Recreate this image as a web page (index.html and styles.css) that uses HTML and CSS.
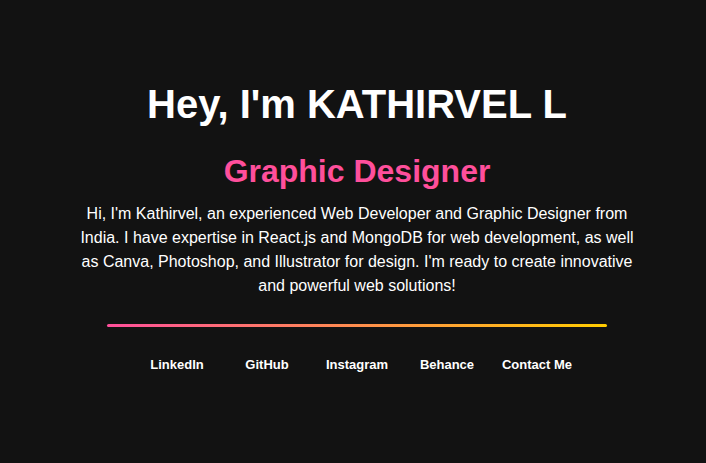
FILE: index.html
```html
<!DOCTYPE html>
<html lang="en">
<head>
<meta charset="UTF-8">
<title>Kathirvel L</title>
<link rel="stylesheet" href="styles.css">
</head>
<body>
<main class="hero">
  <h1 class="title">Hey, I'm KATHIRVEL L</h1>
  <h2 class="role">Graphic Designer</h2>
  <p class="intro">Hi, I'm Kathirvel, an experienced Web Developer and Graphic Designer from India. I have expertise in React.js and MongoDB for web development, as well as Canva, Photoshop, and Illustrator for design. I'm ready to create innovative and powerful web solutions!</p>
  <div class="divider"></div>
  <nav class="links">
    <a href="#">LinkedIn</a>
    <a href="#">GitHub</a>
    <a href="#">Instagram</a>
    <a href="#">Behance</a>
    <a href="#">Contact Me</a>
  </nav>
</main>
</body>
</html>
```
FILE: styles.css
```css
html, body {
  margin: 0;
  padding: 0;
  background: #121212;
}
body {
  font-family: "Liberation Sans", Arial, sans-serif;
  color: #ffffff;
  height: 463px;
}
.hero {
  display: flex;
  flex-direction: column;
  align-items: center;
  padding-top: 81px;
  padding-left: 8px;
}
.title {
  margin: 0;
  font-size: 40px;
  line-height: 46px;
  font-weight: 700;
  text-align: center;
}
.role {
  margin: 25px 0 0;
  font-size: 32px;
  line-height: 38px;
  font-weight: 700;
  color: #ff4f9b;
}
.intro {
  margin: 12px 0 0;
  width: 564px;
  font-size: 16px;
  line-height: 24px;
  text-align: center;
}
.divider {
  margin-top: 26px;
  width: 500px;
  height: 3px;
  border-radius: 2px;
  background: linear-gradient(90deg, #ff4f9b, #ffcc00);
}
.links {
  margin-top: 30px;
  display: flex;
}
.links a {
  width: 90px;
  text-align: center;
  color: #ffffff;
  text-decoration: none;
  font-size: 13px;
  line-height: 16px;
  font-weight: 700;
}
```
